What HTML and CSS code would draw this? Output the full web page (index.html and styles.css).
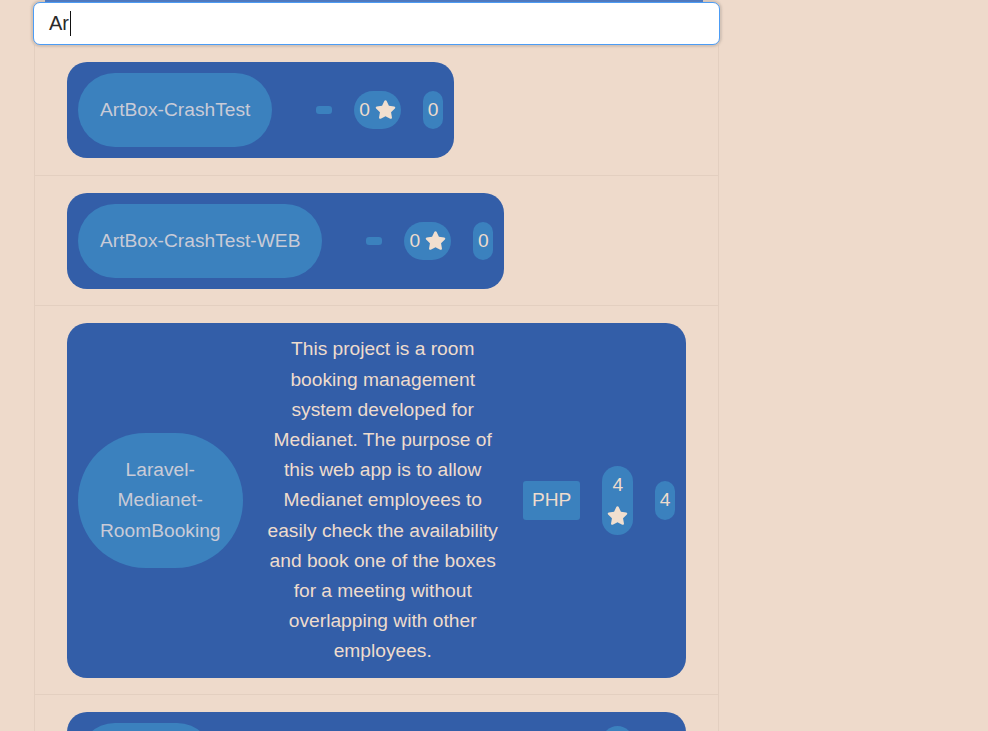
FILE: index.html
```html
<!DOCTYPE html>
<html lang="en">
<head>
<meta charset="utf-8">
<title>Repository search</title>
<link rel="stylesheet" href="styles.css">
</head>
<body>
<div class="search">
  <div class="topbar"></div>
  <div class="field"><span class="value">Ar</span><span class="caret"></span></div>
  <ul class="results">
    <li class="row">
      <div class="card">
        <div class="name">ArtBox-CrashTest</div>
        <div class="desc"></div>
        <span class="lang"></span>
        <span class="stars">0 <svg class="star" viewBox="0 0 576 512"><path d="M259.3 17.8L194 150.2 47.9 171.5c-26.2 3.8-36.7 36.1-17.7 54.6l105.7 103-25 145.5c-4.5 26.3 23.2 46 46.4 33.7L288 439.6l130.7 68.7c23.2 12.2 50.9-7.4 46.4-33.7l-25-145.5 105.7-103c19-18.5 8.5-50.8-17.7-54.6L382 150.2 316.7 17.8c-11.7-23.6-45.6-23.9-57.4 0z"/></svg></span>
        <span class="forks">0</span>
      </div>
    </li>
    <li class="row">
      <div class="card">
        <div class="name">ArtBox-CrashTest-WEB</div>
        <div class="desc"></div>
        <span class="lang"></span>
        <span class="stars">0 <svg class="star" viewBox="0 0 576 512"><path d="M259.3 17.8L194 150.2 47.9 171.5c-26.2 3.8-36.7 36.1-17.7 54.6l105.7 103-25 145.5c-4.5 26.3 23.2 46 46.4 33.7L288 439.6l130.7 68.7c23.2 12.2 50.9-7.4 46.4-33.7l-25-145.5 105.7-103c19-18.5 8.5-50.8-17.7-54.6L382 150.2 316.7 17.8c-11.7-23.6-45.6-23.9-57.4 0z"/></svg></span>
        <span class="forks">0</span>
      </div>
    </li>
    <li class="row">
      <div class="card">
        <div class="name">Laravel-Medianet-RoomBooking</div>
        <div class="desc">This project is a room booking management system developed for Medianet. The purpose of this web app is to allow Medianet employees to easily check the availability and book one of the boxes for a meeting without overlapping with other employees.</div>
        <span class="lang">PHP</span>
        <span class="stars">4 <svg class="star" viewBox="0 0 576 512"><path d="M259.3 17.8L194 150.2 47.9 171.5c-26.2 3.8-36.7 36.1-17.7 54.6l105.7 103-25 145.5c-4.5 26.3 23.2 46 46.4 33.7L288 439.6l130.7 68.7c23.2 12.2 50.9-7.4 46.4-33.7l-25-145.5 105.7-103c19-18.5 8.5-50.8-17.7-54.6L382 150.2 316.7 17.8c-11.7-23.6-45.6-23.9-57.4 0z"/></svg></span>
        <span class="forks">4</span>
      </div>
    </li>
    <li class="row">
      <div class="card">
        <div class="name">ArtBoxApp</div>
        <div class="desc">Android application of the ArtBox platform for artists.</div>
        <span class="lang">Kotlin</span>
        <span class="stars">2 <svg class="star" viewBox="0 0 576 512"><path d="M259.3 17.8L194 150.2 47.9 171.5c-26.2 3.8-36.7 36.1-17.7 54.6l105.7 103-25 145.5c-4.5 26.3 23.2 46 46.4 33.7L288 439.6l130.7 68.7c23.2 12.2 50.9-7.4 46.4-33.7l-25-145.5 105.7-103c19-18.5 8.5-50.8-17.7-54.6L382 150.2 316.7 17.8c-11.7-23.6-45.6-23.9-57.4 0z"/></svg></span>
        <span class="forks">1</span>
      </div>
    </li>
  </ul>
</div>
</body>
</html>
```

FILE: styles.css
```css
html, body {
  margin: 0;
  padding: 0;
}

body {
  background: #eedacb;
  font-family: "Liberation Sans", Arial, sans-serif;
  overflow: hidden;
}

.search {
  width: 687px;
  margin-left: 33px;
}

.topbar {
  height: 2px;
  margin: 0 17px 0 12px;
  background: #2f6fd2;
}

.field {
  display: flex;
  align-items: center;
  box-sizing: border-box;
  height: 43px;
  padding-left: 15px;
  background: #ffffff;
  border: 1px solid #4c9cf5;
  border-radius: 7px;
  box-shadow: 0 0 2px 2px rgba(160, 150, 140, 0.35);
  position: relative;
  z-index: 1;
  font-size: 20px;
  color: #2a2a2a;
}

.caret {
  width: 1px;
  height: 25px;
  margin-left: 1px;
  background: #111111;
}

.results {
  list-style: none;
  margin: 0 1px;
  padding: 0;
  border: 1px solid #e3cfc0;
  border-top: none;
  border-radius: 0 0 6px 6px;
}

.row {
  display: flex;
  padding: 17px 32px 16.5px;
  border-top: 1px solid #e3cfc0;
}

.row:first-child {
  border-top: none;
}

.card {
  display: flex;
  align-items: center;
  gap: 22px;
  max-width: 100%;
  box-sizing: border-box;
  padding: 11px;
  background: #335ea8;
  border-radius: 20px;
  font-size: 19.2px;
  line-height: 30.2px;
  color: #eedccd;
}

.name {
  padding: 22px;
  background: #3b81be;
  border-radius: 999px;
  color: #c9cbd7;
  text-align: center;
}

.desc {
  text-align: center;
}

.lang {
  padding: 4px 9px;
  background: #3b81be;
  border-radius: 3px;
}

.lang:empty {
  padding: 4px 8px;
}

.stars {
  padding: 4px 5px;
  background: #3b81be;
  border-radius: 20px;
  text-align: center;
}

.star {
  width: 21px;
  height: 19px;
  vertical-align: -3px;
  fill: #f1dfcf;
}

.forks {
  padding: 4px 4.5px;
  background: #3b81be;
  border-radius: 10px;
}
```
